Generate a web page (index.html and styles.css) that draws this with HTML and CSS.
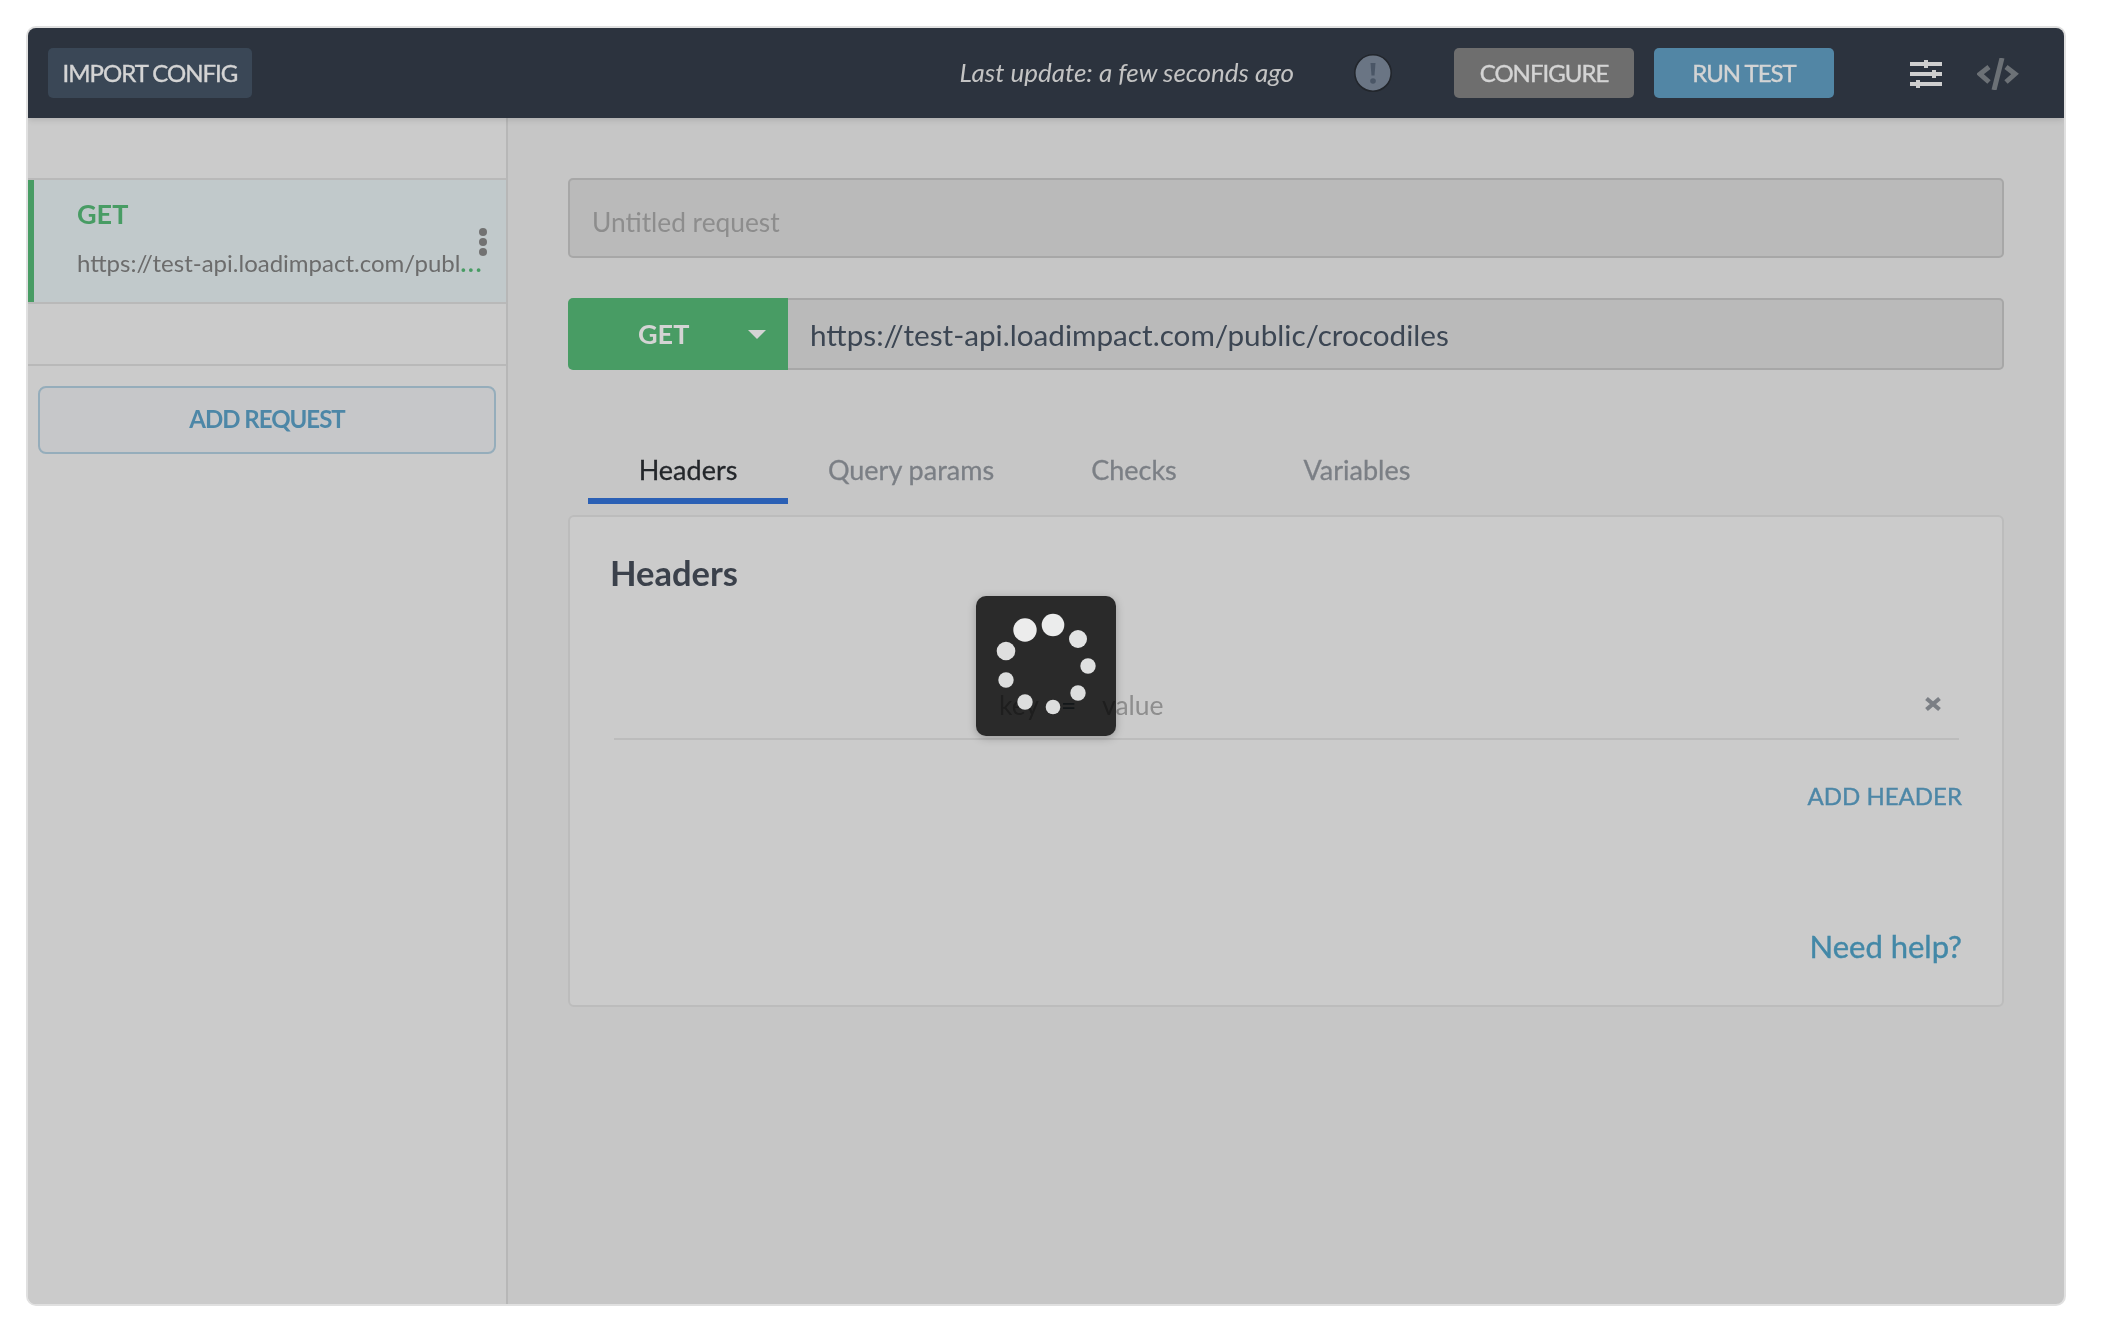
FILE: index.html
```html
<!DOCTYPE html>
<html lang="en">
<head>
<meta charset="utf-8">
<title>Test builder</title>
<link rel="stylesheet" href="styles.css">
</head>
<body>
<div class="window">
  <header class="topbar">
    <button class="btn btn-import">IMPORT CONFIG</button>
    <div class="spacer"></div>
    <em class="updated">Last update: a few seconds ago</em>
    <svg class="icon-alert" viewBox="0 0 38 38" width="38" height="38" aria-hidden="true">
      <circle cx="19" cy="19" r="18.2" fill="#6a7584" stroke="#22262c" stroke-width="1.6"/>
      <path d="M16.5 9h5l-1 12.5h-3z" fill="#4a5666"/>
      <circle cx="19" cy="27" r="2.8" fill="#4a5666"/>
    </svg>
    <button class="btn btn-configure">CONFIGURE</button>
    <button class="btn btn-run">RUN TEST</button>
    <svg class="icon-sliders" viewBox="0 0 32 28" width="32" height="28" aria-hidden="true">
      <g fill="#cfcfcf">
        <rect x="0" y="2" width="32" height="4"/><rect x="14" y="0" width="4" height="8"/>
        <rect x="0" y="12" width="32" height="4"/><rect x="22" y="10" width="4" height="8"/>
        <rect x="0" y="22" width="32" height="4"/><rect x="6" y="20" width="4" height="8"/>
      </g>
    </svg>
    <svg class="icon-code" viewBox="0 0 42 32" width="42" height="32" aria-hidden="true">
      <g fill="none" stroke="#6c7176" stroke-width="5">
        <path d="M12 9 3 16l9 8"/><path d="M29 9l9 7-9 8"/><path d="M25 0 17 32"/>
      </g>
    </svg>
  </header>
  <div class="body">
    <aside class="sidebar">
      <div class="item">
        <div class="item-method">GET</div>
        <div class="item-url"><span class="item-url-text">https://test-api.loadimpact.com/publ</span><span class="item-ellipsis">...</span></div>
        <span class="kebab"><i></i><i></i><i></i></span>
      </div>
      <div class="item-gap"></div>
      <button class="btn-add">ADD REQUEST</button>
    </aside>
    <main class="main">
      <div class="field title-field">Untitled request</div>
      <div class="url-row">
        <div class="method"><span class="method-name">GET</span><span class="caret"></span></div>
        <div class="url">https://test-api.loadimpact.com/public/crocodiles</div>
      </div>
      <nav class="tabs">
        <a class="tab tab-active">Headers</a>
        <a class="tab">Query params</a>
        <a class="tab">Checks</a>
        <a class="tab">Variables</a>
      </nav>
      <section class="card">
        <h2 class="card-title">Headers</h2>
        <div class="kv">
          <span class="kv-key">key</span>
          <span class="kv-eq">=</span>
          <span class="kv-value">value</span>
          <svg class="kv-x" viewBox="0 0 18 18" width="18" height="18" aria-hidden="true"><path d="M2.5 3.5 15.5 14.5M15.5 3.5 2.5 14.5" stroke="#7b7f85" stroke-width="4.2" fill="none"/></svg>
        </div>
        <a class="add-header">ADD HEADER</a>
        <a class="help">Need help?</a>
      </section>
    </main>
  </div>
  <div class="spinner">
    <svg viewBox="0 0 140 140" width="140" height="140" aria-hidden="true">
      <circle cx="49" cy="34" r="11.7" fill="#ececec"/>
      <circle cx="77" cy="29" r="11.3" fill="#ebecec"/>
      <circle cx="102" cy="43" r="9" fill="#e2e3e3"/>
      <circle cx="112" cy="70" r="7.7" fill="#dfe0e0"/>
      <circle cx="102" cy="97" r="7.7" fill="#dcdddd"/>
      <circle cx="77" cy="111" r="7.3" fill="#dcdddd"/>
      <circle cx="49" cy="106" r="7.7" fill="#dcdddd"/>
      <circle cx="30" cy="84" r="7.7" fill="#dcdddd"/>
      <circle cx="30" cy="55" r="9.3" fill="#dfdfdf"/>
    </svg>
  </div>
</div>
</body>
</html>
```

FILE: styles.css
```css
* { box-sizing: border-box; }
html, body { margin: 0; height: 100%; background: #fff; }
body { padding: 26px 36px 22px 26px; font-family: "Lato", "Liberation Sans", sans-serif; }
button { font-family: inherit; border: 0; cursor: pointer; }

.window {
  position: relative;
  width: 2040px;
  height: 1280px;
  border: 2px solid #e0e0e0;
  border-radius: 10px;
  overflow: hidden;
  display: flex;
  flex-direction: column;
  background: #c6c6c6;
}

.topbar {
  flex: none;
  height: 90px;
  padding: 20px 0 0 20px;
  display: flex;
  align-items: flex-start;
  background: #2c333e;
  box-shadow: 0 2px 6px rgba(0,0,0,.12);
  position: relative;
  z-index: 1;
}
.spacer { flex: 1; }
.btn {
  height: 50px;
  border-radius: 5px;
  color: #d4d4d4;
  font-size: 24px;
  letter-spacing: -1px;
  -webkit-text-stroke: .4px currentColor;
  text-align: center;
  padding: 0 0 2px;
}
.btn-import { width: 204px; background: #3a4756; }
.btn-configure { width: 180px; background: #6e6e6e; margin-left: 62px; }
.btn-run { width: 180px; background: #5286a5; margin: 0 76px 0 20px; }
.updated { margin-top: 6px; font-size: 26px; line-height: 36px; color: #c3c3c3; }
.icon-alert { margin: 6px 0 0 60px; flex: none; }
.icon-sliders { margin-top: 12px; flex: none; }
.icon-code { margin: 10px 45px 0 35px; flex: none; }

.body { flex: 1; display: flex; min-height: 0; }
.sidebar {
  flex: none;
  width: 480px;
  background: #cbcbcb;
  border-right: 2px solid #b7b7b7;
  padding-top: 60px;
}
.item {
  position: relative;
  height: 126px;
  padding: 16px 20px 0 49px;
  background: #c1c9cb;
  border-top: 2px solid #b9b9b9;
  border-bottom: 2px solid #b9b9b9;
  box-shadow: inset 6px 0 0 #489c64;
}
.item-method { font-size: 27px; line-height: 36px; font-weight: 700; color: #489c64; }
.item-url { margin-top: 15px; font-size: 24px; line-height: 32px; color: #6c6c6c; white-space: nowrap; width: 410px; overflow: hidden; }
.item-ellipsis { color: #489c64; font-weight: 700; letter-spacing: 2px; }
.kebab {
  position: absolute; right: 19px; top: 48px;
  display: flex; flex-direction: column; gap: 2px;
}
.kebab i { width: 8px; height: 8px; border-radius: 50%; background: #727272; }
.item-gap { height: 62px; border-bottom: 2px solid #b9b9b9; }
.btn-add {
  display: block;
  width: 458px; height: 68px;
  margin: 20px 0 0 10px;
  padding: 0 0 3px;
  background: #c6c7c9;
  border: 2px solid #95adbb;
  border-radius: 8px;
  color: #4d87a7;
  font-size: 24px; font-weight: 700;
  letter-spacing: -1px;
}

.main { flex: 1; padding: 60px 60px 0 60px; min-width: 0; }
.field {
  height: 80px;
  padding: 23px 22px 0;
  background: #bababa;
  border: 2px solid #a7a7a7;
  border-radius: 5px;
  color: #8d8d8d;
  font-size: 26.3px; line-height: 38px;
}
.url-row { display: flex; height: 72px; margin-top: 40px; }
.method {
  flex: none;
  width: 220px;
  display: flex; align-items: center;
  padding: 0 0 2px 70px;
  background: #489c64;
  border-radius: 5px 0 0 5px;
  color: #d4d4d4;
}
.method-name { font-size: 27px; font-weight: 700; width: 110px; }
.caret { width: 0; height: 0; margin-top: 2px; border: 9px solid transparent; border-top: 9px solid #d4d4d4; border-bottom: 0; }
.url {
  flex: 1;
  padding: 1px 0 0 22px;
  background: #bababa;
  border: solid #a7a7a7;
  border-width: 2px 2px 2px 0;
  border-radius: 0 5px 5px 0;
  color: #3c4653;
  font-size: 29.7px; line-height: 68px;
}
.tabs { display: flex; gap: 23px; margin: 54px 0 0 20px; height: 80px; }
.tab {
  width: 200px; height: 80px;
  padding-top: 26px;
  text-align: center;
  font-size: 27px; line-height: 40px;
  -webkit-text-stroke: .3px currentColor;
  color: #7b7f85;
}
.tab-active { color: #24272b; border-bottom: 6px solid #2b60b5; }
.card {
  position: relative;
  height: 492px;
  margin-top: 11px;
  padding: 33px 40px 0;
  background: #cbcbcb;
  border: 2px solid #bcbcbc;
  border-radius: 6px;
}
.card-title { margin: 0; font-size: 34.5px; line-height: 46px; font-weight: 700; color: #3b414b; }
.kv {
  position: relative;
  display: flex; align-items: baseline;
  height: 72px;
  margin: 72px 3px 0 4px;
  padding: 19px 0 0 0;
  border-bottom: 2px solid #bcbcbc;
  font-size: 26.5px; line-height: 36px;
}
.kv-key, .kv-eq, .kv-value { position: relative; z-index: 1; mix-blend-mode: multiply; color: #b2b2b2; }
.kv-key { margin-left: 385px; width: 62px; }
.kv-eq { width: 41px; color: #6e8a96; }
.kv-value { flex: 1; }
.kv-x { position: absolute; right: 17px; top: 27px; }
.add-header {
  display: block;
  margin-top: 39px;
  text-align: right;
  font-size: 24px; line-height: 34px; color: #4d87a7;
  -webkit-text-stroke: .4px currentColor;
}
.help {
  display: block;
  margin-top: 113px;
  text-align: right;
  font-size: 31px; line-height: 40px; color: #4388a7;
  -webkit-text-stroke: .4px currentColor;
}
.spinner {
  position: absolute;
  left: 948px; top: 568px;
  width: 140px; height: 140px;
  border-radius: 10px;
  background: #2a2a2a;
  box-shadow: 0 2px 8px rgba(0,0,0,.25);
}
.spinner svg { display: block; position: relative; z-index: 2; }
```
